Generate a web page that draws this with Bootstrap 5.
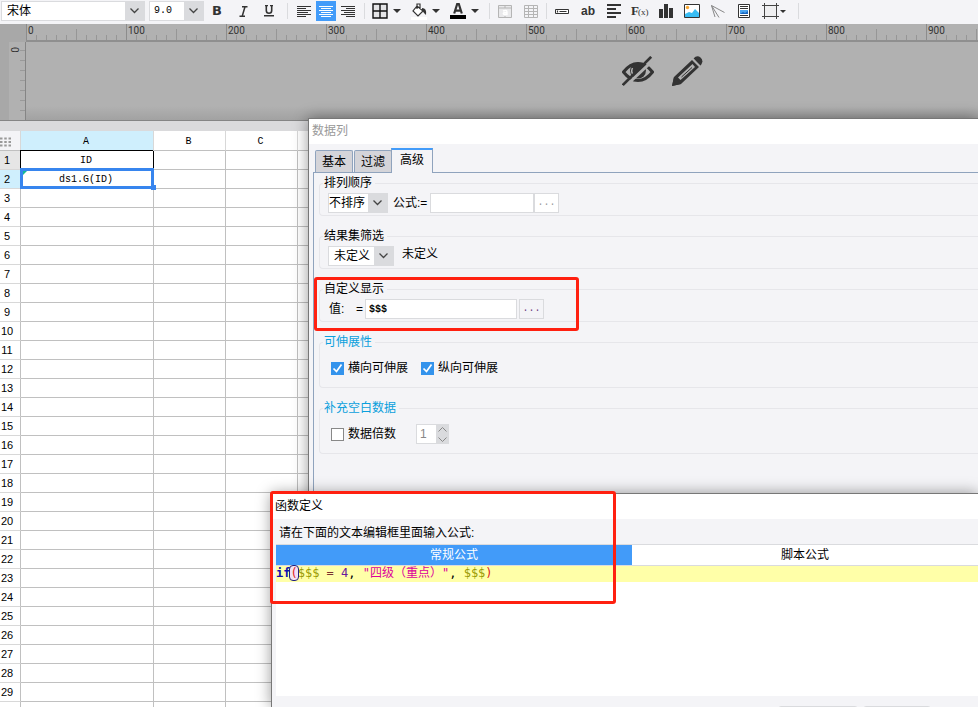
<!DOCTYPE html>
<html lang="zh-CN">
<head>
<meta charset="utf-8">
<meta name="viewport" content="width=device-width, initial-scale=1">
<title>报表设计器</title>
<link rel="stylesheet" href="https://cdn.jsdelivr.net/npm/bootstrap@5.3.0/dist/css/bootstrap.min.css">
<style>
  :root { --panel: #f4f4f7; --edge: #dadbde; --grid: #c0c0c0; --accent: #429bf9; --tick: #8c8c8c; }
  body { font: 12px/14px "Liberation Sans", "Noto Sans CJK SC", sans-serif; color: #000; background: #fff; }
  button, input, select { font: inherit; color: inherit; }
  svg { display: block; flex: none; }
  .designer { height: 100vh; }

  .toolstrip { height: 24px; background: var(--panel); padding: 1px 1px 3px; }
  .tool { width: 26px; height: 20px; padding: 0; border: 0; border-radius: 0; background: none; display: flex; align-items: center; justify-content: center; color: #333; flex: none; }
  .tool.narrow { width: 22px; }
  .tool.is-on { background: var(--accent); width: 20px; margin: 0 1px; }
  .tool.drop { width: 39px; gap: 5px; justify-content: flex-start; padding-left: 2px; }
  .tool.tight { gap: 1px; padding-left: 5px; }
  .tool.tight .down { border-width: 3px 3px 0; }
  .glyph { font: bold 13px/20px "DejaVu Sans", sans-serif; }
  .divide { width: 1px; height: 16px; background: #dadbde; margin: 0 2px; flex: none; }
  .divide.wide { margin: 0 5px; }
  .down { width: 0; height: 0; border: 4px solid transparent; border-top-color: #333; border-bottom: 0; }
  .pick { appearance: none; height: 20px; border: 1px solid var(--edge); border-radius: 0; padding: 0 20px 0 1px; color: #000;
    background: url("data:image/svg+xml,%3Csvg xmlns='http://www.w3.org/2000/svg' width='9' height='6'%3E%3Cpath d='M.5.5l4 4 4-4' fill='none' stroke='%23444' stroke-width='1.3'/%3E%3C/svg%3E") no-repeat right 5px center,
    linear-gradient(#dadbde, #dadbde) no-repeat right / 19px 100%, #fff; }
  .pick-font { width: 144px; padding-left: 5px; }
  .pick-size { width: 55px; margin-left: 4px; padding-left: 4px; font-family: "Liberation Mono", monospace; font-size: 10px; }
  .pick-order { width: 60px; padding-left: 0; }
  .pick-filter { width: 66px; padding-left: 5px; }

  .canvas-area { height: 97px; background: #b1b1b1; border-bottom: 1px solid #858585; }
  .gutter { width: 9px; background: #a8a8a8; }
  .ruler-x { height: 18px; border-bottom: 2px solid #8f8f8f;
    background: repeating-linear-gradient(90deg, var(--tick) 0 1px, transparent 1px 100px) 0 0 / 100% 100%,
      repeating-linear-gradient(90deg, #969696 0 1px, transparent 1px 50px) 0 100% / 100% 11px no-repeat,
      repeating-linear-gradient(90deg, #969696 0 1px, transparent 1px 10px) 0 100% / 100% 5px no-repeat, #b1b1b1; }
  .ruler-x span { width: 100px; flex: none; padding: 1px 0 0 2px; font: 10px/12px Roboto, sans-serif; color: #333; }
  .corner-x { width: 26px; background: #a8a8a8; }
  .ruler-y { width: 17px; border-right: 1px solid #858585;
    background: repeating-linear-gradient(transparent 0 8px, #999 8px 9px, transparent 9px 10px) 100% 0 / 5px 100% no-repeat, #b1b1b1; }
  .ruler-y span { writing-mode: vertical-rl; font: 10px/11px Roboto, sans-serif; color: #333; }
  .stage { background: linear-gradient(transparent 64px, #a2a2a2); padding-left: 596px; gap: 18px; padding-top: 14px; }

  .sheet-area { background: linear-gradient(#dadadc 10px, #fff 10px); padding-top: 10px; }
  .sheet { table-layout: fixed; width: 100%; border-collapse: separate; border-spacing: 0; text-align: center; font-family: "Liberation Mono", monospace; font-size: 10px; }
  .sheet th, .sheet td { height: 19px; padding: 1px 0 0; font-weight: normal; line-height: 17px; border: solid var(--grid); border-width: 0 1px 1px 0; position: relative; }
  .sheet thead th { height: 20px; padding-top: 3px; line-height: 16px; border-right-color: #d8d8d8; border-bottom-color: var(--grid); }
  .sheet tbody th { border-bottom-color: #d8d8d8; font-family: "Liberation Sans", sans-serif; font-size: 11px; padding-right: 6px; }
  .sheet td, .sheet thead th { padding-right: 2px; }
  .sheet .sel-head { background: #cfeffd; }
  .sheet .near-head { background: #e6e6e6; }
  .sheet .corner-head { background: var(--panel); }
  .sheet .id-cell { border-right-color: #000; box-shadow: -1px -1px 0 #000; z-index: 1; }
  .chosen { position: absolute; inset: -2px -1px -1px -1px; border: 3px solid #3785ee; }
  .chosen::before { content: ""; position: absolute; left: 0; top: 0; border: 2px solid #13b897; border-right-color: transparent; border-bottom-color: transparent; }
  .chosen::after { content: ""; position: absolute; right: -5px; bottom: -4px; width: 5px; height: 5px; background: #3785ee; }

  .win { position: absolute; right: 0; bottom: 0; background: var(--panel); border: solid #777; border-width: 1px 0 0 1px; box-shadow: 0 0 14px rgba(0, 0, 0, .4); overflow: hidden; }
  .win-column { left: 308px; top: 118px; }
  .win-formula { left: 271px; top: 493px; }
  .win-title { background: #fff; height: 25px; padding: 5px 3px; }
  .win-title.idle { color: #999; }
  .tabs { padding: 4px 0 0 6px; height: 28px; gap: 1px; }
  .tab { border: 1px solid #8fa3bd; border-bottom: 0; border-radius: 2px 2px 0 0; background: #d4d4d9; padding: 0 6px; height: 22px; }
  .tab.is-on { height: 25px; background: var(--panel); border-top: 2px solid var(--accent); border-radius: 0; padding: 0 8px 3px; margin-left: -2px; margin-bottom: -1px; position: relative; }
  .pane { margin-left: 4px; border: solid #8fa3bd; border-width: 1px 0 0 1px; padding: 3px 0 0 5px; height: 100%; }
  .pane fieldset { border: 1px solid #e6e6ea; border-right: 0; border-radius: 4px 0 0 4px; padding: 0 0 2px 3px; margin-bottom: 13px; }
  .pane legend { float: none; width: auto; margin: 0; padding: 0 3px 0 1px; font-size: 12px; line-height: 14px; }
  .pane .line { height: 20px; margin-top: 3px; padding-left: 5px; display: flex; align-items: center; }
  .pane .airy { margin: 9px 0 7px; }
  .blue { color: #0a9fdc; }
  .box { height: 20px; border: 1px solid var(--edge); border-radius: 0; padding: 0 3px; background: #fff; min-width: 0; }
  .order-label { width: 42px; padding-left: 5px; white-space: nowrap; }
  .order-box { width: 104px; }
  .shown-label { width: 37px; padding: 0 2px 0 1px; }
  .shown-box { width: 152px; font: bold 10px "Liberation Mono", monospace; }
  .more { height: 20px; width: 25px; border: 1px solid var(--edge); background: #fff; padding: 0; font-family: "Liberation Mono", monospace; font-size: 10px; color: #999; }
  .more.dim { background: var(--panel); color: #704080; margin-left: 2px; }
  .tick { appearance: none; width: 13px; height: 13px; margin: 0 4px 0 3px; border: 1px solid #888; background: #fff; flex: none; }
  .tick:checked { border-color: #3393ec; background: #3393ec url("data:image/svg+xml,%3Csvg xmlns='http://www.w3.org/2000/svg' width='11' height='11'%3E%3Cpath d='M1.5 5.5l3 3 5-7' fill='none' stroke='%23fff' stroke-width='1.7'/%3E%3C/svg%3E") center no-repeat; }
  .gap-after { margin-right: 10px; }
  .spin-box { width: 20px; margin-left: 20px; color: #888; border-right: 0; }
  .spin { width: 13px; height: 10px; border: 0; padding: 0; background: var(--edge); display: flex; align-items: center; justify-content: center; }

  .prompt-line { height: 25px; padding: 7px 7px 0; }
  .editor { margin-left: 4px; }
  .modes { border: solid var(--edge); border-width: 1px 0; }
  .mode { flex: 1 0 0; height: 20px; border: 0; padding: 0; background: #fff; }
  .mode.is-on { background: var(--accent); color: #fff; flex: 0 0 356px; }
  .code-area { height: 130px; background: #fff; }
  .code-line { background: #ffffa8; height: 16px; margin: 0; overflow: visible; font: 12px/14px "DejaVu Sans Mono", "Noto Sans CJK SC", monospace; color: #000; }
  .code-line b { color: #1010b0; }
  .var { color: #999900; }
  .str { color: #dc009c; }
  .sym { color: #7a3030; }
  .num { color: #6a1aa0; }
  .par { color: #e02020; }
  .par-on { outline: 1px solid #202080; border-radius: 3px; background: #f3e0f5; }
  .foot { gap: 5px; padding: 10px 47px 0 0; }
  .foot button { width: 80px; height: 22px; border: 1px solid var(--edge); border-radius: 3px; background: #fff; }
  .foot button + button { width: 68px; }

  .callout-red { position: absolute; border: 3px solid #ff2010; border-radius: 3px; pointer-events: none; }
  .callout-value { left: 314px; top: 277px; width: 265px; height: 54px; }
  .callout-formula { left: 270px; top: 491px; width: 346px; height: 113px; }
</style>
</head>
<body>
<div class="designer position-relative overflow-hidden d-flex flex-column">

  <div class="toolstrip d-flex align-items-center" role="toolbar" aria-label="格式">
    <select class="pick pick-font" aria-label="字体"><option>宋体</option></select>
    <select class="pick pick-size" aria-label="字号"><option>9.0</option></select>
    <button class="tool glyph" aria-label="加粗">B</button>
    <button class="tool" aria-label="斜体"><svg width="9" height="11" viewBox="0 0 9 11"><path d="M3 .7h5.500M.5 10.300H6M6 .7L3.200 10.300" stroke="#333" stroke-width="1.500" fill="none"/></svg></button>
    <button class="tool" aria-label="下划线"><svg width="10" height="12" viewBox="0 0 10 12"><path d="M1 .5h3M6 .5h3M2.300 0v5.500q0 2.800 2.700 2.800t2.700-2.800V0" fill="none" stroke="#333" stroke-width="1.600"/><path d="M0 10h10v1.500H0z" fill="#333"/></svg></button>
    <span class="divide wide"></span>
    <button class="tool narrow" aria-label="左对齐"><svg width="14" height="11" viewBox="0 0 14 11"><path d="M0 .5h14M0 2.500h9M0 4.500h14M0 6.500h11M0 8.500h14M0 10.500h9" stroke="#333"/></svg></button>
    <button class="tool narrow is-on" aria-label="居中"><svg width="14" height="11" viewBox="0 0 14 11"><path d="M0 .5h14M2 2.500h10M0 4.500h14M2 6.500h10M0 8.500h14M2 10.500h10" stroke="#fff"/></svg></button>
    <button class="tool narrow" aria-label="右对齐"><svg width="14" height="11" viewBox="0 0 14 11"><path d="M0 .5h14M5 2.500h9M0 4.500h14M3 6.500h11M0 8.500h14M5 10.500h9" stroke="#333"/></svg></button>
    <span class="divide wide"></span>
    <button class="tool drop" aria-label="边框"><svg width="16" height="16" viewBox="0 0 16 16"><path d="M1 1h14v14H1zM8 1v14M1 8h14" fill="#e4e4e6" stroke="#111" stroke-width="1.400"/></svg><span class="down"></span></button>
    <button class="tool drop" aria-label="填充"><svg width="16" height="17" viewBox="0 0 16 17"><path d="M0 14h16v3H0z" fill="#fff"/><path d="M6 3l6 5-5 5-5-5zM6 6V1h3v5" fill="#fff" stroke="#333" stroke-width="1.200"/><path d="M11 5q5 0 4 7l-2-2-2-3z" fill="#333"/></svg><span class="down"></span></button>
    <button class="tool drop" aria-label="字体颜色"><svg width="16" height="16" viewBox="0 0 16 16"><path d="M4.200 10.500L7.200 1h1.600l3 9.500M5.500 7.600h5" fill="none" stroke="#333" stroke-width="2.200"/><path d="M0 12h16v4H0z" fill="#000"/></svg><span class="down"></span></button>
    <span class="divide"></span>
    <button class="tool" disabled aria-label="合并单元格"><svg width="14" height="13" viewBox="0 0 14 13"><path d="M.5.5h13v12H.5zM.5 3h13M7 0v3M7 11v2" fill="#e9e9eb" stroke="#b5b5b5"/><path d="M5 6q4-1.500 4 1v2.500H6q-1.500-1 0-1.800h3" fill="none" stroke="#fff" stroke-width="1.400"/></svg></button>
    <button class="tool" disabled aria-label="拆分单元格"><svg width="14" height="13" viewBox="0 0 14 13"><path d="M.5.5h13v12H.5zM.5 3.500h13M.5 6.500h13M.5 9.500h13M4.500.5v12M9.500.5v12" fill="none" stroke="#b5b5b5"/></svg></button>
    <span class="divide"></span>
    <button class="tool" aria-label="文本框"><svg width="14" height="5" viewBox="0 0 14 5"><path d="M.5.5h13v4H.5z" fill="#fff" stroke="#333"/><path d="M2.500 1.500v2M4.500 2.500h7" stroke="#333" stroke-width="1.200"/></svg></button>
    <button class="tool fw-bold" aria-label="文本">ab</button>
    <button class="tool" aria-label="段落"><svg width="14" height="14" viewBox="0 0 14 14"><path d="M0 1h14M0 5h9M0 9h14M0 13h9" stroke="#333" stroke-width="1.800"/></svg></button>
    <button class="tool" aria-label="公式"><svg width="20" height="16" viewBox="0 0 20 16"><text x="1" y="12" font-family="Liberation Serif, serif" font-size="13" font-weight="bold" fill="#333">F</text><text x="8" y="12" font-family="Liberation Serif, serif" font-size="9" fill="#333">(x)</text></svg></button>
    <button class="tool" aria-label="图表"><svg width="14" height="14" viewBox="0 0 14 14"><path d="M0 5h4v9H0zM5 0h4v14H5zM10 4h4v10h-4z" fill="#333"/></svg></button>
    <button class="tool" aria-label="图片"><svg width="16" height="14" viewBox="0 0 16 14"><path d="M.5.5h15v13H.5z" fill="#fff" stroke="#333"/><circle cx="3.500" cy="3.500" r="1.700" fill="#f8a832"/><path d="M1 10l4-2 3 1 3-4 4 4v4H1z" fill="#39bdf4"/></svg></button>
    <button class="tool" aria-label="斜线"><svg width="14" height="13" viewBox="0 0 14 13"><path d="M.5.5l13 7M.5.5L8 12.500M.5.5L4 12" fill="none" stroke="#888"/></svg></button>
    <button class="tool" aria-label="子报表"><svg width="12" height="14" viewBox="0 0 12 14"><path d="M.5.5h11v13H.5z" fill="#fff" stroke="#333"/><path d="M2 2.500h8M2 4.500h8M2 11.500h8" stroke="#333"/><path d="M2 6h8v4H2z" fill="#4ba4ef"/><path d="M2 10l3-2 2 1 3-2v3z" fill="#1766c0"/></svg></button>
    <button class="tool drop tight" aria-label="形状"><svg width="17" height="16" viewBox="0 0 17 16"><path d="M2.500 2.500h12v11h-12z" fill="#efeff1" stroke="#444"/><path d="M0 2h3v1H0zM14 2h3v1h-3zM0 13h3v1H0zM14 13h3v1h-3zM2 0h1v3H2zM14 0h1v3h-1zM2 13h1v3H2zM14 13h1v3h-1z" fill="#444"/></svg><span class="down"></span></button>
    <span class="divide"></span>
  </div>

  <div class="canvas-area d-flex flex-column flex-shrink-0">
    <div class="d-flex">
      <div class="corner-x flex-shrink-0"></div>
      <div class="ruler-x d-flex flex-grow-1 overflow-hidden"><span>0</span><span>100</span><span>200</span><span>300</span><span>400</span><span>500</span><span>600</span><span>700</span><span>800</span><span>900</span></div>
    </div>
    <div class="d-flex flex-grow-1">
      <div class="gutter"></div>
      <div class="ruler-y"><span>0</span></div>
      <div class="stage d-flex flex-grow-1 align-items-start">
        <svg width="32" height="30" viewBox="0 0 32 30" role="img" aria-label="隐藏"><path d="M1.500 16Q8 7.500 16 7.500T30.500 16Q24 24.500 16 24.500T1.500 16z" fill="none" stroke="#333" stroke-width="3"/><circle cx="16" cy="14.500" r="8" fill="#333"/><path d="M10.500 12q-2 4 1 7" fill="none" stroke="#b1b1b1" stroke-width="1.500"/><path d="M2.500 31L33 2.500" stroke="#b1b1b1" stroke-width="3"/><path d="M.8 29L29.200.8" stroke="#333" stroke-width="2.600"/></svg>
        <svg width="32" height="30" viewBox="0 0 32 30" role="img" aria-label="编辑"><path fill-rule="evenodd" d="M0 30l2-9L20 4l7 7L9 28zM6 21.500L8.500 24 23 11 20.500 8z" fill="#333"/><path d="M0 30l2-9 7 7z" fill="#333"/><path d="M9.500 21L20 11.500" stroke="#333" stroke-width="1"/><path d="M21.500 2.500q3.500-4 7-1t.5 7.500l-1 1z" fill="#333"/><path d="M20.500 2.500l8 8" stroke="#b1b1b1" stroke-width="1.300"/></svg>
      </div>
    </div>
  </div>

  <div class="sheet-area flex-grow-1 overflow-hidden">
    <table class="sheet">
      <colgroup><col width="21"><col width="133"><col width="72"><col width="72"><col></colgroup>
      <thead><tr><th class="corner-head" aria-label="全选"><svg width="11" height="10" viewBox="0 0 11 10"><path d="M0 1.500h11M0 5h11M0 8.500h11" stroke="#999" stroke-width="2" stroke-dasharray="2.500 1.750"/></svg></th><th class="sel-head">A</th><th>B</th><th>C</th><th></th></tr></thead>
      <tbody>
        <tr><th class="near-head">1</th><td class="id-cell">ID</td><td></td><td></td><td></td></tr>
        <tr><th class="sel-head">2</th><td class="z-1">ds1.G(ID)<span class="chosen"></span></td><td></td><td></td><td></td></tr>
        <tr><th>3</th><td></td><td></td><td></td><td></td></tr>
        <tr><th>4</th><td></td><td></td><td></td><td></td></tr>
        <tr><th>5</th><td></td><td></td><td></td><td></td></tr>
        <tr><th>6</th><td></td><td></td><td></td><td></td></tr>
        <tr><th>7</th><td></td><td></td><td></td><td></td></tr>
        <tr><th>8</th><td></td><td></td><td></td><td></td></tr>
        <tr><th>9</th><td></td><td></td><td></td><td></td></tr>
        <tr><th>10</th><td></td><td></td><td></td><td></td></tr>
        <tr><th>11</th><td></td><td></td><td></td><td></td></tr>
        <tr><th>12</th><td></td><td></td><td></td><td></td></tr>
        <tr><th>13</th><td></td><td></td><td></td><td></td></tr>
        <tr><th>14</th><td></td><td></td><td></td><td></td></tr>
        <tr><th>15</th><td></td><td></td><td></td><td></td></tr>
        <tr><th>16</th><td></td><td></td><td></td><td></td></tr>
        <tr><th>17</th><td></td><td></td><td></td><td></td></tr>
        <tr><th>18</th><td></td><td></td><td></td><td></td></tr>
        <tr><th>19</th><td></td><td></td><td></td><td></td></tr>
        <tr><th>20</th><td></td><td></td><td></td><td></td></tr>
        <tr><th>21</th><td></td><td></td><td></td><td></td></tr>
        <tr><th>22</th><td></td><td></td><td></td><td></td></tr>
        <tr><th>23</th><td></td><td></td><td></td><td></td></tr>
        <tr><th>24</th><td></td><td></td><td></td><td></td></tr>
        <tr><th>25</th><td></td><td></td><td></td><td></td></tr>
        <tr><th>26</th><td></td><td></td><td></td><td></td></tr>
        <tr><th>27</th><td></td><td></td><td></td><td></td></tr>
        <tr><th>28</th><td></td><td></td><td></td><td></td></tr>
        <tr><th>29</th><td></td><td></td><td></td><td></td></tr>
        <tr><th></th><td></td><td></td><td></td><td></td></tr>
      </tbody>
    </table>
  </div>

  <section class="win win-column z-1" aria-label="数据列">
    <div class="win-title idle">数据列</div>
    <div class="tabs d-flex align-items-end" role="tablist">
      <button class="tab" role="tab">基本</button>
      <button class="tab" role="tab">过滤</button>
      <button class="tab is-on" role="tab" aria-selected="true">高级</button>
    </div>
    <div class="pane">
      <fieldset>
        <legend>排列顺序</legend>
        <div class="line">
          <select class="pick pick-order" aria-label="排列顺序"><option>不排序</option></select>
          <label for="order" class="order-label">公式:=</label><input id="order" class="box order-box">
          <button class="more" aria-label="编辑公式">...</button>
        </div>
      </fieldset>
      <fieldset>
        <legend>结果集筛选</legend>
        <div class="line">
          <select class="pick pick-filter" aria-label="结果集筛选"><option>未定义</option></select>
          <span class="ps-1 pb-1 ms-1">未定义</span>
        </div>
      </fieldset>
      <fieldset>
        <legend>自定义显示</legend>
        <div class="line">
          <label for="shown" class="shown-label d-flex justify-content-between"><span>值:</span><span>=</span></label>
          <input id="shown" class="box shown-box" value="$$$">
          <button class="more dim" aria-label="编辑值">...</button>
        </div>
      </fieldset>
      <fieldset>
        <legend class="blue">可伸展性</legend>
        <div class="line airy">
          <input class="tick" type="checkbox" id="horz" checked><label for="horz" class="gap-after">横向可伸展</label>
          <input class="tick" type="checkbox" id="vert" checked><label for="vert">纵向可伸展</label>
        </div>
      </fieldset>
      <fieldset>
        <legend class="blue">补充空白数据</legend>
        <div class="line airy">
          <input class="tick" type="checkbox" id="times"><label for="times">数据倍数</label>
          <input class="box spin-box" value="1" aria-label="倍数">
          <div><button class="spin" aria-label="增加"><svg width="9" height="5" viewBox="0 0 9 5"><path d="M.5 4.500l4-4 4 4" fill="none" stroke="#888"/></svg></button><button class="spin" aria-label="减少"><svg width="9" height="5" viewBox="0 0 9 5"><path d="M.5.5l4 4 4-4" fill="none" stroke="#888"/></svg></button></div>
        </div>
      </fieldset>
    </div>
  </section>

  <section class="win win-formula z-2" aria-label="函数定义">
    <div class="win-title">函数定义</div>
    <div class="prompt-line">请在下面的文本编辑框里面输入公式:</div>
    <div class="editor">
      <div class="modes d-flex">
        <button class="mode is-on">常规公式</button>
        <button class="mode">脚本公式</button>
      </div>
      <div class="code-area"><pre class="code-line"><b>if</b><span class="par par-on">(</span><span class="var">$$$</span> <span class="sym">=</span> <span class="num">4</span>, <span class="str">"四级（重点）"</span>, <span class="var">$$$</span><span class="par">)</span></pre></div>
    </div>
    <div class="foot d-flex justify-content-end"><button aria-label="确定"></button><button aria-label="取消"></button></div>
  </section>

  <div class="callout-red callout-value z-3"></div>
  <div class="callout-red callout-formula z-3"></div>
</div>
<script src="https://cdn.jsdelivr.net/npm/bootstrap@5.3.0/dist/js/bootstrap.bundle.min.js"></script>
</body>
</html>
